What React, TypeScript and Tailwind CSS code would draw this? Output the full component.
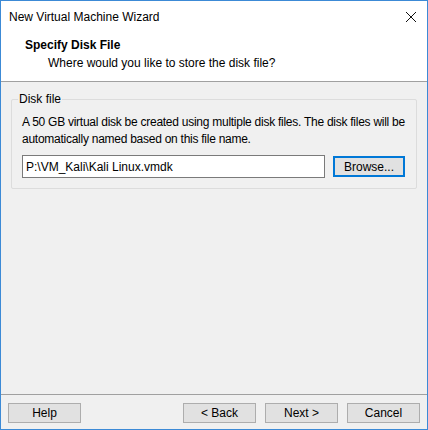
export default function App() {
  return (
    <div className="w-[428px] h-[430px] bg-[#f0f0f0] border border-[#3c8ad6] flex flex-col text-[12px] text-black font-['Segoe_UI','Liberation_Sans',sans-serif] overflow-hidden">
      {/* title bar */}
      <div className="h-[31px] bg-white flex items-center justify-between pl-[8px] pr-[10px] shrink-0">
        <span>New Virtual Machine Wizard</span>
        <svg width="12" height="12" viewBox="0 0 12 12">
          <path d="M1 1 L11 11 M11 1 L1 11" stroke="#111" strokeWidth="1" />
        </svg>
      </div>
      {/* header */}
      <div className="h-[50px] bg-white border-b border-[#a0a0a0] pl-[24px] pt-[5px] shrink-0">
        <p className="font-bold leading-[16px]">Specify Disk File</p>
        <p className="pl-[23px] leading-[16px] mt-[2px]">Where would you like to store the disk file?</p>
      </div>
      {/* body */}
      <div className="flex-1 px-[10px] pt-[17px]">
        <div className="relative border border-[#dcdcdc] rounded-[2px] h-[90px] px-[10px] pt-[14px]">
          <span className="absolute -top-[9px] left-[6px] px-[1px] bg-[#f0f0f0] leading-[16px]">Disk file</span>
          <p className="leading-[17px] whitespace-nowrap tracking-[-0.26px]">
            A 50 GB virtual disk be created using multiple disk files. The disk files will be
            <br />
            automatically named based on this file name.
          </p>
          <div className="flex items-center mt-[7px] gap-[8px]">
            <div className="w-[303px] h-[23px] bg-white border border-[#7a7a7a] flex items-center pl-[3px]">
              P:\VM_Kali\Kali Linux.vmdk
            </div>
            <button className="w-[72px] h-[21px] bg-[#e1e1e1] border-2 border-[#0078d7] flex items-center justify-center">
              Browse...
            </button>
          </div>
        </div>
      </div>
      {/* footer */}
      <div className="h-[35px] border-t border-[#a0a0a0] flex items-start pt-[8px] pl-[7px] pr-[7px] shrink-0">
        <button className="w-[73px] h-[20px] bg-[#e1e1e1] border border-[#adadad] flex items-center justify-center">Help</button>
        <div className="flex-1" />
        <div className="flex gap-[9px]">
          <button className="w-[73px] h-[20px] bg-[#e1e1e1] border border-[#adadad] flex items-center justify-center">&lt; Back</button>
          <button className="w-[73px] h-[20px] bg-[#e1e1e1] border border-[#adadad] flex items-center justify-center">Next &gt;</button>
          <button className="w-[73px] h-[20px] bg-[#e1e1e1] border border-[#adadad] flex items-center justify-center">Cancel</button>
        </div>
      </div>
    </div>
  );
}
